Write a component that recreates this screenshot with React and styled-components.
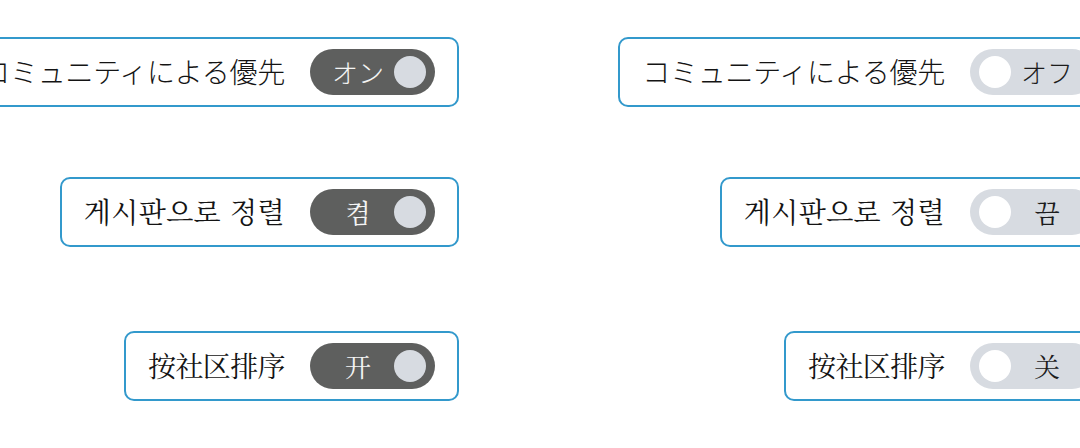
import React from 'react';
import styled, { createGlobalStyle } from 'styled-components';

// ============================================================ styles

const GlobalStyle = createGlobalStyle`
   html, body {
      margin: 0;
      padding: 0;
      background: #ffffff;
      overflow: hidden;
   }
`;

const serifStack = '"Noto Serif CJK KR", "Noto Serif CJK SC", "Noto Serif KR", "Noto Serif SC", "UnBatang", "Baekmuk Batang", "AR PL UMing CN", "AR PL New Sung", "Source Han Serif", "Liberation Serif", serif';
const sansStack = '"Noto Sans CJK JP", sans-serif';

const Page = styled.div`
   display: flex;
   flex-direction: row;
   gap: 160px;
   margin-left: -41px;
   padding-top: 37px;
   width: 1160px;
`;

const Column = styled.div`
   display: flex;
   flex-direction: column;
   align-items: flex-end;
   width: 500px;
   flex-shrink: 0;
`;

const Card = styled.div`
   display: flex;
   align-items: center;
   gap: 25px;
   box-sizing: border-box;
   height: 70px;
   padding: 0 22px 0 22px;
   margin-top: ${({ $space }) => $space}px;
   border: 2px solid #3399cc;
   border-radius: 10px;
   background: #ffffff;
   font-family: ${({ $serif }) => ($serif ? serifStack : sansStack)};
   font-weight: ${({ $serif }) => ($serif ? 400 : 300)};
`;

const Label = styled.span`
   font-size: 28px;
   letter-spacing: ${({ $tracking }) => $tracking}px;
   color: #141414;
   white-space: nowrap;
   margin-top: -2px;
`;

const Switch = styled.div`
   display: flex;
   flex-direction: ${({ $on }) => ($on ? 'row' : 'row-reverse')};
   align-items: center;
   gap: 6px;
   box-sizing: border-box;
   width: 125px;
   height: 46px;
   padding: ${({ $on }) => ($on ? '0 9px 0 18px' : '0 18px 0 9px')};
   border-radius: 23px;
   background: ${({ $on }) => ($on ? '#5e5f5e' : '#d7dbe1')};
   flex-shrink: 0;
`;

const SwitchText = styled.span`
   flex: 1;
   text-align: center;
   font-size: 26px;
   color: ${({ $on }) => ($on ? '#f4f4f4' : '#1c1c1c')};
   white-space: nowrap;
   margin-top: -2px;
`;

const Knob = styled.span`
   width: 32px;
   height: 32px;
   border-radius: 50%;
   background: ${({ $on }) => ($on ? '#d7dbe1' : '#ffffff')};
   flex-shrink: 0;
`;

// ============================================================ data

const rows = [
   { lang: 'ja', label: 'コミュニティによる優先', on: 'オン', off: 'オフ', serif: false, space: 0, tracking: -0.25 },
   { lang: 'ko', label: '게시판으로 정렬', on: '켬', off: '끔', serif: true, space: 70, tracking: 0.4 },
   { lang: 'zh-CN', label: '按社区排序', on: '开', off: '关', serif: true, space: 84, tracking: -0.6 },
];

// ============================================================ component

const Toggle = ({ on, text }) => (
   <Switch $on={on}>
      <SwitchText $on={on}>{text}</SwitchText>
      <Knob $on={on} />
   </Switch>
);

const App = () => {
   const renderColumn = (on) => (
      <Column>
         {rows.map((r) => (
            <Card key={r.lang} lang={r.lang} $serif={r.serif} $space={r.space}>
               <Label $tracking={r.tracking}>{r.label}</Label>
               <Toggle on={on} text={on ? r.on : r.off} />
            </Card>
         ))}
      </Column>
   );

   return (
      <>
         <GlobalStyle />
         <Page>
            {renderColumn(true)}
            {renderColumn(false)}
         </Page>
      </>
   );
};

export default App;
